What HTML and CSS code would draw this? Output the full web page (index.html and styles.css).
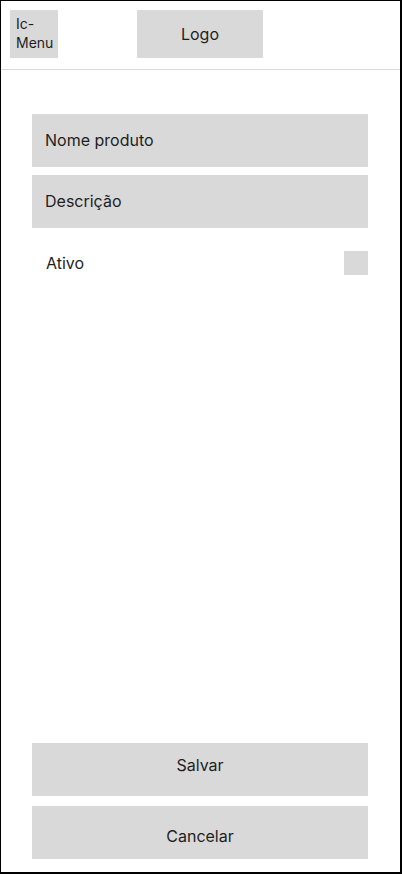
FILE: index.html
```html
<!DOCTYPE html>
<html lang="pt">
<head>
<meta charset="utf-8">
<title>Produto</title>
<link rel="stylesheet" href="styles.css">
</head>
<body>
<div class="screen">
  <header class="topbar">
    <div class="menu-btn">Ic-<br>Menu</div>
    <div class="logo">Logo</div>
  </header>
  <main class="form">
    <div class="field">Nome produto</div>
    <div class="field">Descrição</div>
    <div class="toggle-row">
      <span class="toggle-label">Ativo</span>
      <span class="checkbox"></span>
    </div>
  </main>
  <footer class="actions">
    <div class="btn btn-save">Salvar</div>
    <div class="btn btn-cancel">Cancelar</div>
  </footer>
</div>
</body>
</html>
```
FILE: styles.css
```css
* { box-sizing: border-box; }
html, body { margin: 0; padding: 0; background: #fff; }
body {
  font-family: Inter, "Noto Sans", sans-serif;
  color: #1e1e1e;
}
.screen {
  width: 402px;
  height: 874px;
  border: 1px solid #000;
  border-right-width: 2px;
  border-bottom-width: 2px;
  display: flex;
  flex-direction: column;
}
.topbar {
  height: 69px;
  flex: none;
  padding: 9px 9px 0;
  border-bottom: 1px solid #d9d9d9;
  display: flex;
  align-items: flex-start;
}
.menu-btn {
  width: 48px;
  height: 48px;
  background: #d9d9d9;
  font-size: 14px;
  line-height: 19px;
  padding: 4px 0 0 6px;
}
.logo {
  width: 126px;
  height: 48px;
  margin-left: 79px;
  background: #d9d9d9;
  display: flex;
  align-items: center;
  justify-content: center;
  font-size: 16px;
  line-height: 19px;
}
.form {
  flex: 1;
  padding: 44px 32px 0 31px;
  display: flex;
  flex-direction: column;
  gap: 8px;
}
.field {
  height: 53px;
  background: #d9d9d9;
  display: flex;
  align-items: center;
  padding-left: 13px;
  font-size: 16px;
  line-height: 19px;
}
.toggle-row {
  margin-top: 15px;
  display: flex;
  align-items: center;
  justify-content: space-between;
  padding-left: 14px;
  font-size: 16px;
  line-height: 19px;
}
.checkbox {
  width: 24px;
  height: 24px;
  background: #d9d9d9;
}
.actions {
  flex: none;
  padding: 0 32px 13px 31px;
  display: flex;
  flex-direction: column;
  gap: 10px;
}
.btn {
  height: 53px;
  background: #d9d9d9;
  text-align: center;
  font-size: 16px;
  line-height: 19px;
}
.btn-save { padding-top: 13px; }
.btn-cancel { padding-top: 21px; }
```
